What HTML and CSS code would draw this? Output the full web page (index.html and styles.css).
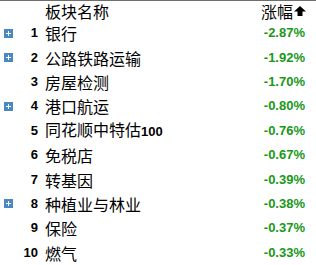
FILE: index.html
```html
<!DOCTYPE html>
<html>
<head>
<meta charset="utf-8">
<link rel="stylesheet" href="styles.css">
</head>
<body>
<div class="table">
  <div class="row head">
    <span class="ic"></span><span class="num"></span><span class="name">板块名称</span>
    <span class="pct hpct">涨幅<svg class="arrow" width="12" height="10" viewBox="0 0 12 10"><path d="M6 0 L12 5.5 L8.5 5.5 L8.5 10 L3.5 10 L3.5 5.5 L0 5.5 Z" fill="#000"/></svg></span>
  </div>
  <div class="row"><span class="ic"><i class="plus"></i></span><span class="num">1</span><span class="name">银行</span><span class="pct">-2.87%</span></div>
  <div class="row"><span class="ic"><i class="plus"></i></span><span class="num">2</span><span class="name">公路铁路运输</span><span class="pct">-1.92%</span></div>
  <div class="row"><span class="ic"></span><span class="num">3</span><span class="name">房屋检测</span><span class="pct">-1.70%</span></div>
  <div class="row"><span class="ic"><i class="plus"></i></span><span class="num">4</span><span class="name">港口航运</span><span class="pct">-0.80%</span></div>
  <div class="row"><span class="ic"></span><span class="num">5</span><span class="name">同花顺中特估<b class="d">100</b></span><span class="pct">-0.76%</span></div>
  <div class="row"><span class="ic"></span><span class="num">6</span><span class="name">免税店</span><span class="pct">-0.67%</span></div>
  <div class="row"><span class="ic"></span><span class="num">7</span><span class="name">转基因</span><span class="pct">-0.39%</span></div>
  <div class="row"><span class="ic"><i class="plus"></i></span><span class="num">8</span><span class="name">种植业与林业</span><span class="pct">-0.38%</span></div>
  <div class="row"><span class="ic"></span><span class="num">9</span><span class="name">保险</span><span class="pct">-0.37%</span></div>
  <div class="row"><span class="ic"></span><span class="num">10</span><span class="name">燃气</span><span class="pct">-0.33%</span></div>
</div>
</body>
</html>
```
FILE: styles.css
```css
html, body {
  margin: 0;
  padding: 0;
  background: #fff;
  overflow: hidden;
}
.table {
  border-top: 1px solid #6e6e6e;
  width: 316px;
  font-family: "Noto Sans CJK SC", "Liberation Sans", sans-serif;
}
.row {
  display: grid;
  grid-template-columns: 18px 20px 1fr 80px;
  align-items: center;
  height: 24.4px;
  color: #000;
  line-height: 18px;
}
.row.head {
  height: 20px;
}
.ic {
  display: flex;
  align-items: center;
  justify-content: flex-start;
  padding-left: 4px;
}
.plus {
  display: block;
  width: 9px;
  height: 9px;
  background: #4a88c2;
  position: relative;
}
.plus::before, .plus::after {
  content: "";
  position: absolute;
  background: #fff;
}
.plus::before {
  left: 2px; top: 4px; width: 5px; height: 1px;
}
.plus::after {
  left: 4px; top: 2px; width: 1px; height: 5px;
}
.num {
  text-align: right;
  font-family: "Liberation Sans", sans-serif;
  font-weight: bold;
  font-size: 13px;
}
.name {
  padding-left: 7px;
  font-size: 16px;
  white-space: nowrap;
}
.d {
  font-family: "Liberation Sans", sans-serif;
  font-weight: bold;
  font-size: 13px;
}
.pct {
  text-align: right;
  padding-right: 11px;
  font-family: "Liberation Sans", sans-serif;
  font-weight: bold;
  font-size: 13px;
  color: #1a981a;
}
.hpct {
  color: #000;
  font-family: "Noto Sans CJK SC", sans-serif;
  font-weight: normal;
  font-size: 16px;
  display: flex;
  justify-content: flex-end;
  align-items: center;
  gap: 1px;
  padding-right: 10px;
}
.arrow {
  display: block;
  flex-shrink: 0;
  width: 12px;
  height: 10px;
}
```
